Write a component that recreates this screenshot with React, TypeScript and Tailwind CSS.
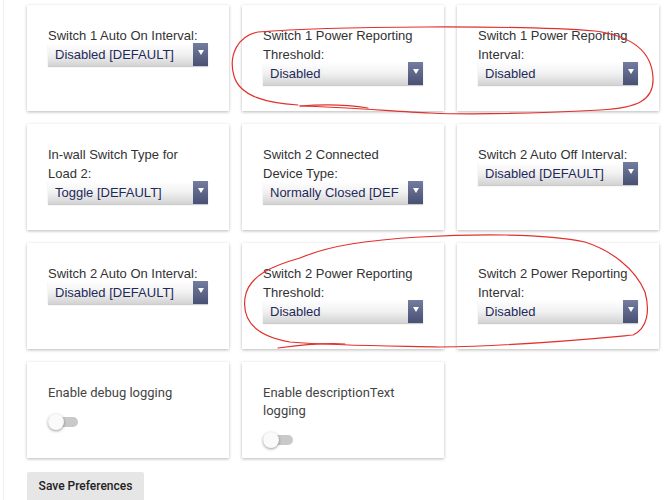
import type { ReactNode } from 'react'

type Item =
  | { kind: 'select'; label: string; value: string }
  | { kind: 'toggle'; label: string }

const ROWS: Item[][] = [
  [
    { kind: 'select', label: 'Switch 1 Auto On Interval:', value: 'Disabled [DEFAULT]' },
    { kind: 'select', label: 'Switch 1 Power Reporting Threshold:', value: 'Disabled' },
    { kind: 'select', label: 'Switch 1 Power Reporting Interval:', value: 'Disabled' },
  ],
  [
    { kind: 'select', label: 'In-wall Switch Type for Load 2:', value: 'Toggle [DEFAULT]' },
    { kind: 'select', label: 'Switch 2 Connected Device Type:', value: 'Normally Closed [DEF' },
    { kind: 'select', label: 'Switch 2 Auto Off Interval:', value: 'Disabled [DEFAULT]' },
  ],
  [
    { kind: 'select', label: 'Switch 2 Auto On Interval:', value: 'Disabled [DEFAULT]' },
    { kind: 'select', label: 'Switch 2 Power Reporting Threshold:', value: 'Disabled' },
    { kind: 'select', label: 'Switch 2 Power Reporting Interval:', value: 'Disabled' },
  ],
  [
    { kind: 'toggle', label: 'Enable debug logging' },
    { kind: 'toggle', label: 'Enable descriptionText logging' },
  ],
]

function Card({ children, tight }: { children: ReactNode; tight?: boolean }) {
  return (
    <div
      className={
        'bg-white pl-[21px] pr-[21px] shadow-[0_1px_3px_rgba(0,0,0,0.28)] ' +
        (tight ? 'pt-[22px] pb-[8px]' : 'pt-[21px] pb-[25px] min-h-[106px]')
      }
    >
      {children}
    </div>
  )
}

function FakeSelect({ value }: { value: string }) {
  return (
    <div className="mt-[-2px] flex h-[23px] w-[160px] bg-gradient-to-b from-[#ffffff] via-[#f1f1f1] to-[#d3d3d3] shadow-[0_1px_1px_rgba(0,0,0,0.2)]">
      <div className="flex-1 overflow-hidden whitespace-nowrap pl-[7px] text-[13px] leading-[23px] text-[#1e2a5a]">
        {value}
      </div>
      <div className="flex w-[15px] items-start justify-center bg-gradient-to-b from-[#747d9f] to-[#485174] pt-[7px]">
        <svg width="6" height="5" viewBox="0 0 6 5">
          <path d="M0 0 L6 0 L3 5 Z" fill="#ffffff" />
        </svg>
      </div>
    </div>
  )
}

function Toggle() {
  return (
    <div className="relative mt-[10px] h-[20px] w-[32px]">
      <div className="absolute left-0 top-[5px] h-[10px] w-[30px] rounded-full bg-[#c9c9c9]" />
      <div className="absolute left-0 top-[2px] h-[16px] w-[16px] rounded-full bg-[#fafafa] shadow-[0_1px_3px_rgba(0,0,0,0.4)]" />
    </div>
  )
}

export default function App() {
  return (
    <div className="relative h-[500px] w-[665px] overflow-hidden bg-white font-['Liberation_Sans',Arial,sans-serif]">
      <div className="ml-[3px] h-full border-l border-[#eeeeee] pl-[23px] pt-[5px]">
        <div className="grid grid-cols-[202px_202px_202px] gap-[13px]">
          {ROWS.flat().map((item) =>
            item.kind === 'select' ? (
              <Card key={item.label}>
                <div className="w-[151px] text-[13px] leading-[19px] text-[#333333]">{item.label}</div>
                <FakeSelect value={item.value} />
              </Card>
            ) : (
              <Card key={item.label} tight>
                <div className="font-['Roboto',sans-serif] text-[13px] leading-[18px] text-[#444444]">
                  {item.label}
                </div>
                <Toggle />
              </Card>
            ),
          )}
        </div>
        <button className="mt-[14px] h-[36px] w-[117px] rounded-t-[2px] bg-[#e6e6e6] pb-[8px] font-['Roboto',sans-serif] text-[12px] font-medium leading-[16px] text-[#222222]">
          Save Preferences
        </button>
      </div>

      <svg
        className="pointer-events-none absolute left-0 top-0"
        width="665"
        height="500"
        viewBox="0 0 665 500"
        fill="none"
        stroke="#e1312d"
        strokeWidth="1.2"
        strokeLinecap="round"
      >
        <path d="M298 105 C268 103 240 97 234 76 C228 55 238 36 258 32 C330 26 520 25 595 31 C632 36 652 52 653 78 C654 100 638 108 600 110 C540 113 470 115 430 113 C390 111 345 107 300 106" />
        <path d="M300 106 C325 104 350 105 368 108" />
        <path d="M300 258 C275 265 248 275 245 298 C242 320 255 336 290 342 C340 346 400 346 440 347 C520 346 590 339 633 335 C648 328 650 310 645 292 C635 268 610 250 585 242 C545 233 470 234 420 237 C370 240 330 245 300 258" />
        <path d="M278 348 C300 345 325 343 345 344" />
      </svg>
    </div>
  )
}
